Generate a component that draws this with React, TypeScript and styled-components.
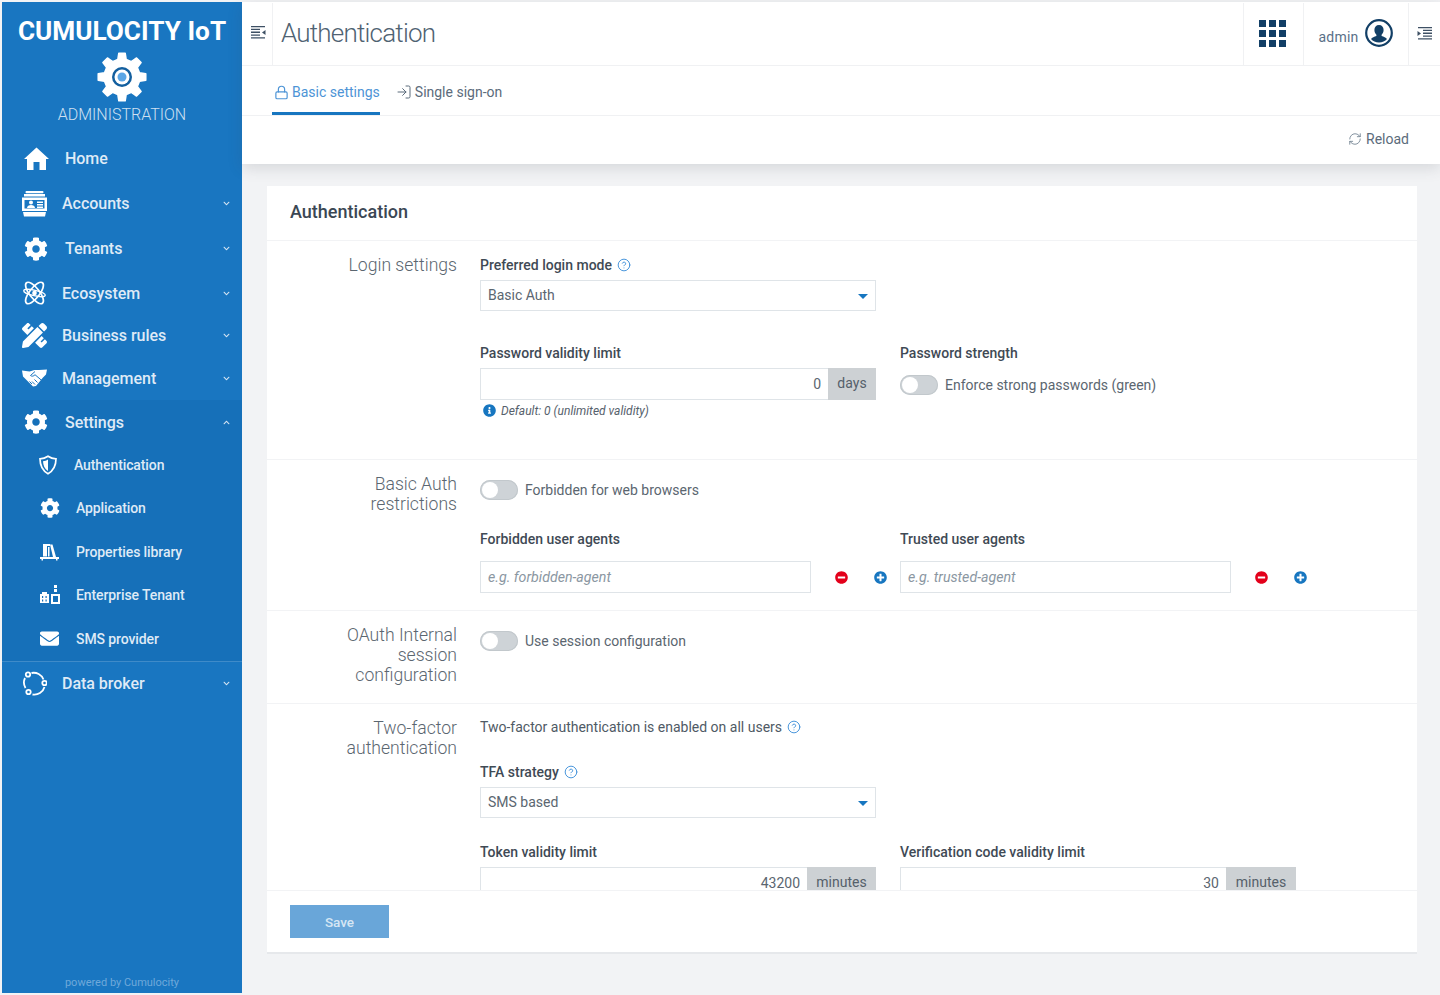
import React, { FC, ReactNode } from "react";
import styled, { createGlobalStyle } from "styled-components";
import {
  FaCog,
  FaPencilRuler,
  FaEnvelope,
  FaMinusCircle,
  FaPlusCircle,
  FaInfoCircle,
  FaChevronDown,
  FaChevronUp,
} from "react-icons/fa";
import { Lock, LogIn, RefreshCw, CircleHelp } from "lucide-react";

const GlobalStyle = createGlobalStyle`
  html, body {
    margin: 0;
    padding: 0;
    height: 100%;
    background: #f2f3f5;
    font-family: Roboto, "Liberation Sans", sans-serif;
    overflow: hidden;
  }
  * { box-sizing: border-box; }
`;

const Shell = styled.div`
  display: flex;
  height: 995px;
  padding: 2px 0 2px 2px;
  background: #f2f3f5;
`;

const Sidebar = styled.aside`
  width: 240px;
  flex: none;
  display: flex;
  flex-direction: column;
  background: #1976c1;
  color: #dfeaf6;
`;

const Brand = styled.div`
  height: 134px;
  display: flex;
  flex-direction: column;
  align-items: center;
`;

const BrandName = styled.div`
  margin-top: 13px;
  height: 32px;
  line-height: 32px;
  font-size: 26.2px;
  font-weight: 700;
  color: #fff;
  white-space: nowrap;
`;

const BrandMark = styled.svg`
  display: block;
  margin-top: 5px;
  width: 50px;
  height: 50px;
`;

const BrandLabel = styled.div`
  margin-top: 3px;
  font-size: 16px;
  line-height: 20px;
  font-weight: 300;
  color: #cfe0f1;
`;

const SubNav = styled.div`
  background: #1670b9;
  border-bottom: 1px solid #3f8bc9;
`;

const NavRow = styled.div<{ $h: number; $indent: number; $slot: number; $sub?: boolean }>`
  height: ${(p) => p.$h}px;
  display: flex;
  align-items: center;
  padding-left: ${(p) => p.$indent}px;
  padding-right: 12px;
  font-size: ${(p) => (p.$sub ? 14 : 16)}px;
  font-weight: 500;
  letter-spacing: ${(p) => (p.$sub ? "-0.1px" : "-0.03px")};
  & > svg:first-child {
    flex: none;
    width: ${(p) => p.$slot}px;
    color: #fff;
  }
`;

const NavText = styled.span<{ $gap: number }>`
  margin-left: ${(p) => p.$gap}px;
  flex: 1;
  white-space: nowrap;
`;

const Caret = styled.span`
  display: flex;
  color: #d5e4f3;
  font-size: 7px;
`;

const PoweredBy = styled.div`
  margin-top: auto;
  height: 20px;
  line-height: 20px;
  text-align: center;
  font-size: 11px;
  color: #6fa9da;
`;

const Main = styled.main`
  flex: 1;
  min-width: 0;
  display: flex;
  flex-direction: column;
`;

const TopPanel = styled.div`
  position: relative;
  z-index: 1;
  background: #fff;
  box-shadow: 0 4px 14px rgba(60, 70, 80, 0.16);
`;

const Header = styled.header`
  height: 63px;
  margin-top: 1px;
  display: flex;
  align-items: stretch;
  border-bottom: 1px solid #f0f1f3;
  color: #30445a;
`;

const MenuCell = styled.div`
  width: 31px;
  flex: none;
  display: flex;
  align-items: center;
  justify-content: center;
  padding: 0 0 3px 3px;
  border-right: 1px solid #f0f1f3;
`;

const Title = styled.h1`
  flex: 1;
  margin: 0;
  padding-left: 8px;
  line-height: 60px;
  font-size: 26px;
  font-weight: 300;
  letter-spacing: -0.8px;
  color: #4f6272;
`;

const HeadCell = styled.div<{ $w: number }>`
  width: ${(p) => p.$w}px;
  flex: none;
  display: flex;
  align-items: center;
  justify-content: center;
  padding-bottom: 2px;
  border-left: 1px solid #f0f1f3;
`;

const AppGrid = styled.div`
  display: grid;
  grid-template-columns: repeat(3, 7px);
  grid-auto-rows: 7px;
  gap: 3px;
  margin-left: -2px;
  span {
    background: #123f66;
  }
`;

const UserName = styled.span`
  font-size: 14px;
  color: #5a7088;
  margin: 7px 7px 0 0;
  letter-spacing: 0.2px;
`;

const Tabs = styled.nav`
  height: 50px;
  display: flex;
  padding-left: 30px;
  border-bottom: 1px solid #f0f1f3;
`;

const Tab = styled.div<{ $active?: boolean }>`
  display: flex;
  align-items: center;
  gap: 3px;
  height: 49px;
  padding-top: 6px;
  padding-left: ${(p) => (p.$active ? 2 : 0)}px;
  margin-right: ${(p) => (p.$active ? 16 : 0)}px;
  font-size: 14px;
  color: ${(p) => (p.$active ? "#4d94d6" : "#5b6b7b")};
  border-bottom: 3px solid ${(p) => (p.$active ? "#1776c0" : "transparent")};
`;

const ActionBar = styled.div`
  height: 48px;
  display: flex;
  align-items: center;
  justify-content: flex-end;
  gap: 4px;
  padding: 0 31px 3px 0;
  font-size: 14px;
  color: #5b6b7b;
`;

const Content = styled.div`
  flex: 1;
  padding: 22px 23px 40px 25px;
  display: flex;
`;

const Card = styled.section`
  flex: 1;
  display: flex;
  flex-direction: column;
  background: #fff;
  border-bottom: 2px solid #e6e8eb;
`;

const CardTitle = styled.h2`
  margin: 0;
  height: 55px;
  padding-left: 23px;
  line-height: 52px;
  font-size: 18px;
  font-weight: 500;
  color: #3b4754;
  border-bottom: 1px solid #f2f3f5;
`;

const CardBody = styled.div`
  height: 649px;
  overflow: hidden;
`;

const Section = styled.div<{ $h: number }>`
  height: ${(p) => p.$h}px;
  display: grid;
  grid-template-columns: 190px 1fr;
  column-gap: 23px;
  border-bottom: 1px solid #f2f3f5;
`;

const SectionLabel = styled.div`
  padding-top: 14px;
  text-align: right;
  font-size: 17.6px;
  line-height: 20px;
  font-weight: 300;
  color: #5b6670;
`;

const SectionFields = styled.div<{ $top: number }>`
  padding-top: ${(p) => p.$top}px;
`;

const Columns = styled.div<{ $top?: number }>`
  display: flex;
  gap: 24px;
  margin-top: ${(p) => p.$top ?? 0}px;
`;

const Column = styled.div<{ $w: number }>`
  width: ${(p) => p.$w}px;
  flex: none;
`;

const FieldLabel = styled.label<{ $top?: number; $gap?: number }>`
  display: flex;
  align-items: center;
  gap: 5px;
  height: 18px;
  margin-top: ${(p) => p.$top ?? 0}px;
  margin-bottom: ${(p) => p.$gap ?? 6}px;
  font-size: 14px;
  font-weight: 500;
  color: #3f4a55;
`;

const Field = styled.div<{ $w?: number }>`
  width: ${(p) => p.$w ?? 396}px;
  height: 32px;
  flex: none;
  display: flex;
  align-items: center;
  padding: 0 7px;
  border: 1px solid #dfe4e8;
  background: #fff;
  font-size: 14px;
  color: #5b6670;
`;

const SelectField = styled(Field)`
  height: 31px;
  padding-bottom: 2px;
  justify-content: space-between;
`;

const SelectCaret = styled.i`
  width: 0;
  height: 0;
  margin-top: 4px;
  border-left: 5.5px solid transparent;
  border-right: 5.5px solid transparent;
  border-top: 5.5px solid #1776c0;
`;

const Placeholder = styled.span`
  font-size: 14.2px;
  font-style: italic;
  color: #8b97a2;
`;

const Group = styled.div`
  display: flex;
  width: 396px;
  height: 32px;
`;

const NumberField = styled(Field)`
  flex: 1;
  width: auto;
  justify-content: flex-end;
  border-right: 0;
`;

const Addon = styled.span<{ $w: number }>`
  width: ${(p) => p.$w}px;
  flex: none;
  background: #cdd1d4;
  color: #55606a;
  font-size: 14px;
  line-height: 30px;
  text-align: center;
`;

const Hint = styled.div`
  display: flex;
  align-items: center;
  gap: 5px;
  margin-top: 2px;
  padding-left: 3px;
  height: 17px;
  font-size: 12px;
  font-style: italic;
  color: #56616c;
`;

const ToggleRow = styled.div`
  display: flex;
  align-items: center;
  gap: 7px;
  height: 20px;
  font-size: 14px;
  color: #5b6670;
`;

const ToggleTrack = styled.span`
  position: relative;
  width: 38px;
  height: 20px;
  flex: none;
  border-radius: 10px;
  background: #ced3d7;
  box-shadow: inset 0 0 0 1px #c2c8cc;
  &::after {
    content: "";
    position: absolute;
    left: 2px;
    top: 2px;
    width: 16px;
    height: 16px;
    border-radius: 50%;
    background: #fff;
  }
`;

const PlainText = styled.div`
  display: flex;
  align-items: center;
  gap: 5px;
  height: 18px;
  font-size: 14px;
  color: #4f5a65;
`;

const AgentRow = styled.div`
  display: flex;
  align-items: center;
`;

const RoundBtn = styled.span<{ $color: string; $left: number }>`
  display: flex;
  margin-left: ${(p) => p.$left}px;
  color: ${(p) => p.$color};
  font-size: 13px;
`;

const CardFooter = styled.div`
  flex: 1;
  padding: 14px 23px;
  border-top: 1px solid #f2f3f5;
`;

const SaveButton = styled.button`
  width: 99px;
  height: 33px;
  border: 0;
  padding: 0;
  background: #69a6d9;
  color: #d6e6f4;
  font: 500 13.5px Roboto, sans-serif;
`;

const HelpIcon = () => <CircleHelp size={14} strokeWidth={1.6} color="#3d8fd9" />;

const gearPath = (cx: number, cy: number, outer: number, inner: number, teeth: number) => {
  const step = (Math.PI * 2) / teeth;
  const pts: string[] = [];
  for (let i = 0; i < teeth; i++) {
    const a = i * step - Math.PI / 2;
    const at = (r: number, d: number) =>
      `${(cx + r * Math.cos(a + d)).toFixed(2)} ${(cy + r * Math.sin(a + d)).toFixed(2)}`;
    pts.push(at(inner, -step * 0.3), at(outer, -step * 0.17), at(outer, step * 0.17), at(inner, step * 0.3));
  }
  return `M${pts.join("L")}Z`;
};

const LogoGear = () => (
  <BrandMark viewBox="0 0 50 50">
    <path d={gearPath(25, 25, 24, 18, 8)} fill="#fff" stroke="#fff" strokeWidth="1.5" strokeLinejoin="round" />
    <circle cx="25" cy="25" r="10" fill="#135f9f" />
    <circle cx="25" cy="25" r="7.5" fill="#fff" />
    <circle cx="25" cy="25" r="4.5" fill="#5ba6e6" />
  </BrandMark>
);

const HomeIcon = () => (
  <svg width="25" height="23" viewBox="0 0 25 23" fill="#fff">
    <path d="M12.5 .5L25 12h-3v11h-6.500v-8h-6v8H3V12H0z" />
  </svg>
);

const AccountsIcon = () => (
  <svg width="25" height="26" viewBox="0 0 25 26" fill="#fff">
    <rect x="3.500" y="0" width="18" height="2.300" rx="1" />
    <rect x="2" y="3" width="21" height="2.500" />
    <path d="M0 6.500h25V20H0zM2.500 9V17.500h20V9z" fillRule="evenodd" />
    <path d="M1 21h23l-1 4.500H2z" />
    <circle cx="9" cy="11.500" r="2" />
    <path d="M5 17c0-2 2-3 4-3s4 1 4 3z" />
    <path d="M15 10.500h6v1.400h-6zM15 13h6v1.400h-6zM15 15.500h6v1.400h-6z" />
  </svg>
);

const AtomIcon = () => (
  <svg width="25" height="26" viewBox="0 0 25 26" fill="none" stroke="#fff" strokeWidth="1.700">
    <ellipse cx="12.500" cy="13" rx="13" ry="5" transform="rotate(52 12.500 13)" />
    <ellipse cx="12.500" cy="13" rx="13" ry="5" transform="rotate(-52 12.500 13)" />
    <ellipse cx="12.500" cy="13" rx="11" ry="2.800" transform="rotate(12 12.500 13)" strokeWidth="1.300" />
    <circle cx="12.500" cy="13" r="1.500" fill="#fff" />
  </svg>
);

const HandshakeIcon = () => (
  <svg width="25" height="18" viewBox="0 0 25 18">
    <path d="M0 1.500L7.500 2.500 12.500 1H17l8-.5-1 5-3 3-7 8.500-3 .5-8-8-2-2z" fill="#fff" />
    <path d="M13 2.500L8.500 6.500c1.500 1.200 3 .8 4.500-.8l7 6M10 15l-2.500-2.500M13 15.500l-3-3M15.500 13.500l-3-3" fill="none" stroke="#1976c1" strokeWidth="1" />
  </svg>
);

const DataBrokerIcon = () => (
  <svg width="25" height="26" viewBox="0 0 25 26" fill="none" stroke="#fff" strokeWidth="1.800">
    <path d="M9.500 3a10.500 10.500 0 0 1 12 6.500M22.500 17a10.500 10.500 0 0 1-12 7.500M3.500 18A10.500 10.500 0 0 1 3 8" />
    <circle cx="6" cy="4.500" r="2.200" />
    <circle cx="22.500" cy="13" r="2.200" />
    <circle cx="6.500" cy="22" r="2.200" />
  </svg>
);

const ShieldIcon = () => (
  <svg width="20" height="20" viewBox="0 0 20 20">
    <path d="M10 1.200c2.600 1.800 5 2.600 8 2.600 0 7-2.200 11.700-8 15-5.800-3.300-8-8-8-15 3 0 5.400-.8 8-2.600z" fill="none" stroke="#fff" strokeWidth="1.700" />
    <path d="M10 4.500v11.500c-3.300-2.200-4.800-5.300-5-9.800 1.800-.1 3.400-.7 5-1.700z" fill="#fff" />
  </svg>
);

const LibraryIcon = () => (
  <svg width="19" height="18" viewBox="0 0 19 18" fill="#fff">
    <path d="M3 1h7v2H7v10.500H3z" />
    <path d="M10 1.500h2.500L16 14h-3z" />
    <path d="M8 4h1.500v9.500H8z" />
    <path d="M0 14h19v2H17.500v1.500H16V16H3v1.500H1.500V16H0z" />
  </svg>
);

const EnterpriseIcon = () => (
  <svg width="20" height="20" viewBox="0 0 20 20" fill="#fff">
    <path d="M0 9h9v9H0z" />
    <path d="M2 7h5v2H2z" />
    <path d="M2 11h1.200v2H2zM5.500 11h1.200v2H5.500zM2 14.500h1.200v2H2zM5.500 14.500h1.200v2H5.500z" fill="#1670b9" />
    <path d="M14 0h3v3h-3zM14 4h3v3h-3z" />
    <path d="M11 9h9v10h-9zM13 11v6h5v-6z" fillRule="evenodd" />
  </svg>
);

const CollapseIcon: FC<{ mirror?: boolean }> = ({ mirror }) => (
  <svg width="15" height="13" viewBox="0 0 15 13" fill="#3e5064" style={mirror ? { transform: "scaleX(-1)" } : undefined}>
    <path d="M0 0h14v1.300H0zM0 2.800h9v1.300H0zM0 5.600h9v1.300H0zM0 8.400h9v1.300H0zM0 11.200h14v1.300H0z" />
    <path d="M14.500 4v5L11 6.500z" />
  </svg>
);

const UserIcon = () => (
  <svg width="28" height="28" viewBox="0 0 28 28">
    <circle cx="14" cy="14" r="12.800" fill="none" stroke="#123f66" strokeWidth="2.200" />
    <path d="M14 6c2.900 0 4.600 2.100 4.600 5 0 2-.9 3.700-2 4.700v1.300c2 .8 4.400 1.300 5.400 3-1.800 2.200-4.700 3.600-8 3.600s-6.200-1.400-8-3.600c1-1.700 3.400-2.200 5.400-3v-1.300c-1.100-1-2-2.700-2-4.700 0-2.900 1.700-5 4.600-5z" fill="#123f66" />
  </svg>
);

interface NavItem {
  label: string;
  icon: ReactNode;
  h: number;
  indent: number;
  slot: number;
  gap: number;
  caret?: "down" | "up";
}

const topItems: NavItem[] = [
  { label: "Home", icon: <HomeIcon />, h: 45, indent: 22, slot: 25, gap: 16 },
  { label: "Accounts", icon: <AccountsIcon />, h: 45, indent: 20, slot: 25, gap: 15, caret: "down" },
  { label: "Tenants", icon: <FaCog size={24} />, h: 45, indent: 22, slot: 24, gap: 17, caret: "down" },
  { label: "Ecosystem", icon: <AtomIcon />, h: 44, indent: 20, slot: 25, gap: 15, caret: "down" },
  { label: "Business rules", icon: <FaPencilRuler size={25} />, h: 41, indent: 20, slot: 25, gap: 15, caret: "down" },
  { label: "Management", icon: <HandshakeIcon />, h: 44, indent: 20, slot: 25, gap: 15, caret: "down" },
];

const subItems: NavItem[] = [
  { label: "Settings", icon: <FaCog size={24} />, h: 44, indent: 22, slot: 24, gap: 17, caret: "up" },
  { label: "Authentication", icon: <ShieldIcon />, h: 42, indent: 36, slot: 20, gap: 16 },
  { label: "Application", icon: <FaCog size={20} />, h: 44, indent: 38, slot: 20, gap: 16 },
  { label: "Properties library", icon: <LibraryIcon />, h: 44, indent: 38, slot: 19, gap: 17 },
  { label: "Enterprise Tenant", icon: <EnterpriseIcon />, h: 42, indent: 38, slot: 20, gap: 16 },
  { label: "SMS provider", icon: <FaEnvelope size={19} />, h: 45, indent: 38, slot: 19, gap: 17 },
];

const Nav: FC<{ item: NavItem; sub?: boolean }> = ({ item, sub }) => (
  <NavRow $h={item.h} $indent={item.indent} $slot={item.slot} $sub={sub}>
    {item.icon}
    <NavText $gap={item.gap}>{item.label}</NavText>
    {item.caret && <Caret>{item.caret === "down" ? <FaChevronDown /> : <FaChevronUp />}</Caret>}
  </NavRow>
);

const Toggle: FC<{ children: ReactNode }> = ({ children }) => (
  <ToggleRow>
    <ToggleTrack />
    {children}
  </ToggleRow>
);

const AgentInput: FC<{ placeholder: string }> = ({ placeholder }) => (
  <AgentRow>
    <Field $w={331}>
      <Placeholder>{placeholder}</Placeholder>
    </Field>
    <RoundBtn $color="#e3001b" $left={24}>
      <FaMinusCircle />
    </RoundBtn>
    <RoundBtn $color="#1776c0" $left={26}>
      <FaPlusCircle />
    </RoundBtn>
  </AgentRow>
);

const App: FC = () => (
  <Shell>
    <GlobalStyle />
    <Sidebar>
      <Brand>
        <BrandName>CUMULOCITY IoT</BrandName>
        <LogoGear />
        <BrandLabel>ADMINISTRATION</BrandLabel>
      </Brand>
      {topItems.map((item) => (
        <Nav key={item.label} item={item} />
      ))}
      <SubNav>
        {subItems.map((item, i) => (
          <Nav key={item.label} item={item} sub={i > 0} />
        ))}
      </SubNav>
      <Nav item={{ label: "Data broker", icon: <DataBrokerIcon />, h: 42, indent: 20, slot: 25, gap: 15, caret: "down" }} />
      <PoweredBy>powered by Cumulocity</PoweredBy>
    </Sidebar>
    <Main>
      <TopPanel>
        <Header>
          <MenuCell>
            <CollapseIcon />
          </MenuCell>
          <Title>Authentication</Title>
          <HeadCell $w={60}>
            <AppGrid>
              {Array.from({ length: 9 }, (_, i) => (
                <span key={i} />
              ))}
            </AppGrid>
          </HeadCell>
          <HeadCell $w={105}>
            <UserName>admin</UserName>
            <UserIcon />
          </HeadCell>
          <HeadCell $w={32}>
            <CollapseIcon mirror />
          </HeadCell>
        </Header>
        <Tabs>
          <Tab $active>
            <Lock size={15} strokeWidth={1.9} color="#4d94d6" />
            Basic settings
          </Tab>
          <Tab>
            <LogIn size={16} strokeWidth={1.5} color="#5b6b7b" />
            Single sign-on
          </Tab>
        </Tabs>
        <ActionBar>
          <RefreshCw size={14} strokeWidth={1.4} color="#6a7a8a" />
          Reload
        </ActionBar>
      </TopPanel>
      <Content>
        <Card>
          <CardTitle>Authentication</CardTitle>
          <CardBody>
            <Section $h={219}>
              <SectionLabel>Login settings</SectionLabel>
              <SectionFields $top={15}>
                <FieldLabel>
                  Preferred login mode <HelpIcon />
                </FieldLabel>
                <SelectField>
                  Basic Auth
                  <SelectCaret />
                </SelectField>
                <Columns $top={33}>
                  <Column $w={396}>
                    <FieldLabel>Password validity limit</FieldLabel>
                    <Group>
                      <NumberField>0</NumberField>
                      <Addon $w={48}>days</Addon>
                    </Group>
                    <Hint>
                      <FaInfoCircle size={13} color="#1776c0" />
                      Default: 0 (unlimited validity)
                    </Hint>
                  </Column>
                  <Column $w={396}>
                    <FieldLabel $gap={13}>Password strength</FieldLabel>
                    <Toggle>Enforce strong passwords (green)</Toggle>
                  </Column>
                </Columns>
              </SectionFields>
            </Section>
            <Section $h={151}>
              <SectionLabel>
                Basic Auth
                <br />
                restrictions
              </SectionLabel>
              <SectionFields $top={20}>
                <Toggle>Forbidden for web browsers</Toggle>
                <Columns $top={30}>
                  <Column $w={396}>
                    <FieldLabel $gap={13}>Forbidden user agents</FieldLabel>
                    <AgentInput placeholder="e.g. forbidden-agent" />
                  </Column>
                  <Column $w={440}>
                    <FieldLabel $gap={13}>Trusted user agents</FieldLabel>
                    <AgentInput placeholder="e.g. trusted-agent" />
                  </Column>
                </Columns>
              </SectionFields>
            </Section>
            <Section $h={93}>
              <SectionLabel>
                OAuth Internal
                <br />
                session
                <br />
                configuration
              </SectionLabel>
              <SectionFields $top={20}>
                <Toggle>Use session configuration</Toggle>
              </SectionFields>
            </Section>
            <Section $h={260}>
              <SectionLabel>
                Two-factor
                <br />
                authentication
              </SectionLabel>
              <SectionFields $top={14}>
                <PlainText>
                  Two-factor authentication is enabled on all users <HelpIcon />
                </PlainText>
                <FieldLabel $top={27}>
                  TFA strategy <HelpIcon />
                </FieldLabel>
                <SelectField>
                  SMS based
                  <SelectCaret />
                </SelectField>
                <Columns $top={25}>
                  <Column $w={396}>
                    <FieldLabel>Token validity limit</FieldLabel>
                    <Group>
                      <NumberField>43200</NumberField>
                      <Addon $w={69}>minutes</Addon>
                    </Group>
                  </Column>
                  <Column $w={396}>
                    <FieldLabel>Verification code validity limit</FieldLabel>
                    <Group>
                      <NumberField>30</NumberField>
                      <Addon $w={70}>minutes</Addon>
                    </Group>
                  </Column>
                </Columns>
              </SectionFields>
            </Section>
          </CardBody>
          <CardFooter>
            <SaveButton>Save</SaveButton>
          </CardFooter>
        </Card>
      </Content>
    </Main>
  </Shell>
);

export default App;
